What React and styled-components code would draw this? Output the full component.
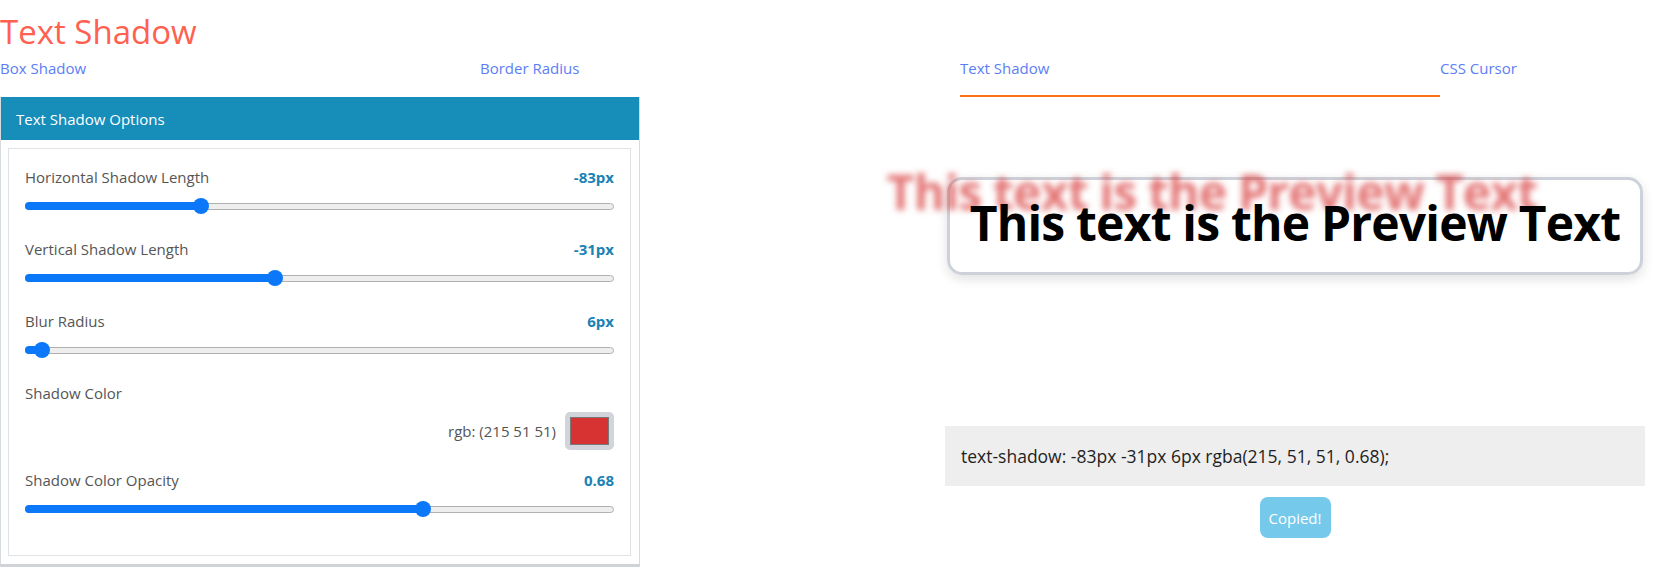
import React from 'react';
import styled, { createGlobalStyle } from 'styled-components';

const GlobalStyle = createGlobalStyle`
  html, body {
    margin: 0;
    padding: 0;
    background: #ffffff;
    overflow: hidden;
  }
  body {
    font-family: "Open Sans", "Noto Sans", sans-serif;
  }
`;

const Page = styled.div`
  width: 1673px;
  box-sizing: border-box;
`;

const Title = styled.h1`
  margin: 0;
  padding-top: 10px;
  font-size: 33px;
  line-height: 44px;
  font-weight: 400;
  color: #ff6150;
`;

const Tabs = styled.nav`
  display: grid;
  grid-template-columns: 480px 480px 480px auto;
  margin-top: 3px;
`;

const Tab = styled.a`
  box-sizing: border-box;
  padding-bottom: 16px;
  font-size: 15px;
  line-height: 22px;
  color: #5b7ef6;
  text-decoration: none;
  border-bottom: 2px solid ${({ active }) => (active ? '#f97316' : 'transparent')};
`;

const Main = styled.div`
  display: flex;
  align-items: flex-start;
  gap: 305px;
`;

const Panel = styled.section`
  width: 640px;
  box-sizing: border-box;
  border-left: 1px solid #d6dbe0;
  border-right: 1px solid #d6dbe0;
  border-bottom: 3px solid #cfd3d8;
`;

const PanelHeader = styled.div`
  height: 43px;
  background: #178dba;
  color: #ffffff;
  font-size: 15px;
  display: flex;
  align-items: center;
  padding-left: 15px;
`;

const PanelBody = styled.div`
  padding: 8px 8px 8px 7px;
`;

const OptionsBox = styled.div`
  border: 1px solid #dfe2e6;
  padding: 17px 16px 38px 16px;
  display: flex;
  flex-direction: column;
`;

const Row = styled.div`
  display: flex;
  flex-direction: column;
  gap: ${({ inner }) => inner || '10px'};
  margin-bottom: ${({ after }) => after || '0'};
`;

const LabelRow = styled.div`
  display: flex;
  justify-content: space-between;
  align-items: center;
  height: 22px;
`;

const Label = styled.span`
  font-size: 15px;
  color: #555555;
`;

const Value = styled.span`
  font-size: 15px;
  font-weight: 700;
  color: #1a82b5;
`;

const Slider = styled.div`
  position: relative;
  height: 16px;
  display: flex;
  align-items: center;
`;

const Track = styled.div`
  width: 100%;
  height: 7px;
  box-sizing: border-box;
  border: 1px solid #b0b0b0;
  border-radius: 4px;
  background: #eeeeee;
`;

const Fill = styled.div`
  position: absolute;
  left: 0;
  top: 4px;
  height: 8px;
  border-radius: 4px;
  background: #0b77f9;
`;

const Thumb = styled.div`
  position: absolute;
  top: 0;
  width: 16px;
  height: 16px;
  margin-left: -8px;
  border-radius: 50%;
  background: #0b77f9;
`;

const ColorLine = styled.div`
  display: flex;
  justify-content: flex-end;
  align-items: center;
  gap: 9px;
`;

const ColorText = styled.span`
  font-size: 15px;
  color: #555555;
`;

const Swatch = styled.div`
  width: 49px;
  height: 38px;
  box-sizing: border-box;
  border: 5px solid #d1d5db;
  border-radius: 5px;
  background: #d1d5db;
  display: flex;
`;

const SwatchColor = styled.div`
  flex: 1;
  border: 1px solid #777777;
  background: ${({ color }) => color};
`;

const PreviewColumn = styled.div`
  width: 700px;
  display: flex;
  flex-direction: column;
  align-items: center;
`;

const PreviewBox = styled.div`
  margin-top: 80px;
  width: 696px;
  height: 98px;
  box-sizing: border-box;
  border: 3px solid #cdd1d9;
  border-radius: 15px;
  box-shadow: 0 4px 12px rgba(0, 0, 0, 0.12);
  display: flex;
  align-items: center;
  justify-content: center;
`;

const PreviewText = styled.div`
  font-family: "Open Sans", "Noto Sans", sans-serif;
  font-size: 48px;
  line-height: 60px;
  font-weight: 700;
  color: #000000;
  white-space: nowrap;
  letter-spacing: -0.8px;
  margin-top: -6px;
  text-shadow: -83px -31px 6px rgba(215, 51, 51, 0.68);
`;

const CodeBox = styled.div`
  margin-top: 151px;
  width: 100%;
  height: 60px;
  box-sizing: border-box;
  background: #eeeeee;
  padding-left: 16px;
  display: flex;
  align-items: center;
  font-size: 17.5px;
  color: #1f1f1f;
`;

const CopyButton = styled.button`
  margin-top: 11px;
  height: 41px;
  padding: 0 9px;
  border: none;
  border-radius: 8px;
  background: #75c9eb;
  color: #ffffff;
  font-family: "Open Sans", "Noto Sans", sans-serif;
  font-size: 15px;
`;

const options = [
  { label: 'Horizontal Shadow Length', value: -83, unit: 'px', min: -200, max: 200 },
  { label: 'Vertical Shadow Length', value: -31, unit: 'px', min: -200, max: 200 },
  { label: 'Blur Radius', value: 6, unit: 'px', min: 0, max: 400 },
];

function RangeSlider({ value, min, max }) {
  const frac = (value - min) / (max - min);
  // thumb centre stays inside the track, like a native range input
  const pos = `calc(8px + ${frac} * (100% - 16px))`;
  return (
    <Slider>
      <Track />
      <Fill style={{ width: pos }} />
      <Thumb style={{ left: pos }} />
    </Slider>
  );
}

export default function App() {
  return (
    <Page>
      <GlobalStyle />
      <Title>Text Shadow</Title>
      <Tabs>
        <Tab href="#">Box Shadow</Tab>
        <Tab href="#">Border Radius</Tab>
        <Tab href="#" active>Text Shadow</Tab>
        <Tab href="#">CSS Cursor</Tab>
      </Tabs>
      <Main>
        <Panel>
          <PanelHeader>Text Shadow Options</PanelHeader>
          <PanelBody>
            <OptionsBox>
              {options.map((o) => (
                <Row key={o.label} after="24px">
                  <LabelRow>
                    <Label>{o.label}</Label>
                    <Value>{o.value}{o.unit}</Value>
                  </LabelRow>
                  <RangeSlider value={o.value} min={o.min} max={o.max} />
                </Row>
              ))}
              <Row inner="8px" after="19px">
                <LabelRow>
                  <Label>Shadow Color</Label>
                </LabelRow>
                <ColorLine>
                  <ColorText>rgb: (215 51 51)</ColorText>
                  <Swatch>
                    <SwatchColor color="#d73333" />
                  </Swatch>
                </ColorLine>
              </Row>
              <Row>
                <LabelRow>
                  <Label>Shadow Color Opacity</Label>
                  <Value>0.68</Value>
                </LabelRow>
                <RangeSlider value={0.68} min={0} max={1} />
              </Row>
            </OptionsBox>
          </PanelBody>
        </Panel>
        <PreviewColumn>
          <PreviewBox>
            <PreviewText>This text is the Preview Text</PreviewText>
          </PreviewBox>
          <CodeBox>text-shadow: -83px -31px 6px rgba(215, 51, 51, 0.68);</CodeBox>
          <CopyButton>Copied!</CopyButton>
        </PreviewColumn>
      </Main>
    </Page>
  );
}
